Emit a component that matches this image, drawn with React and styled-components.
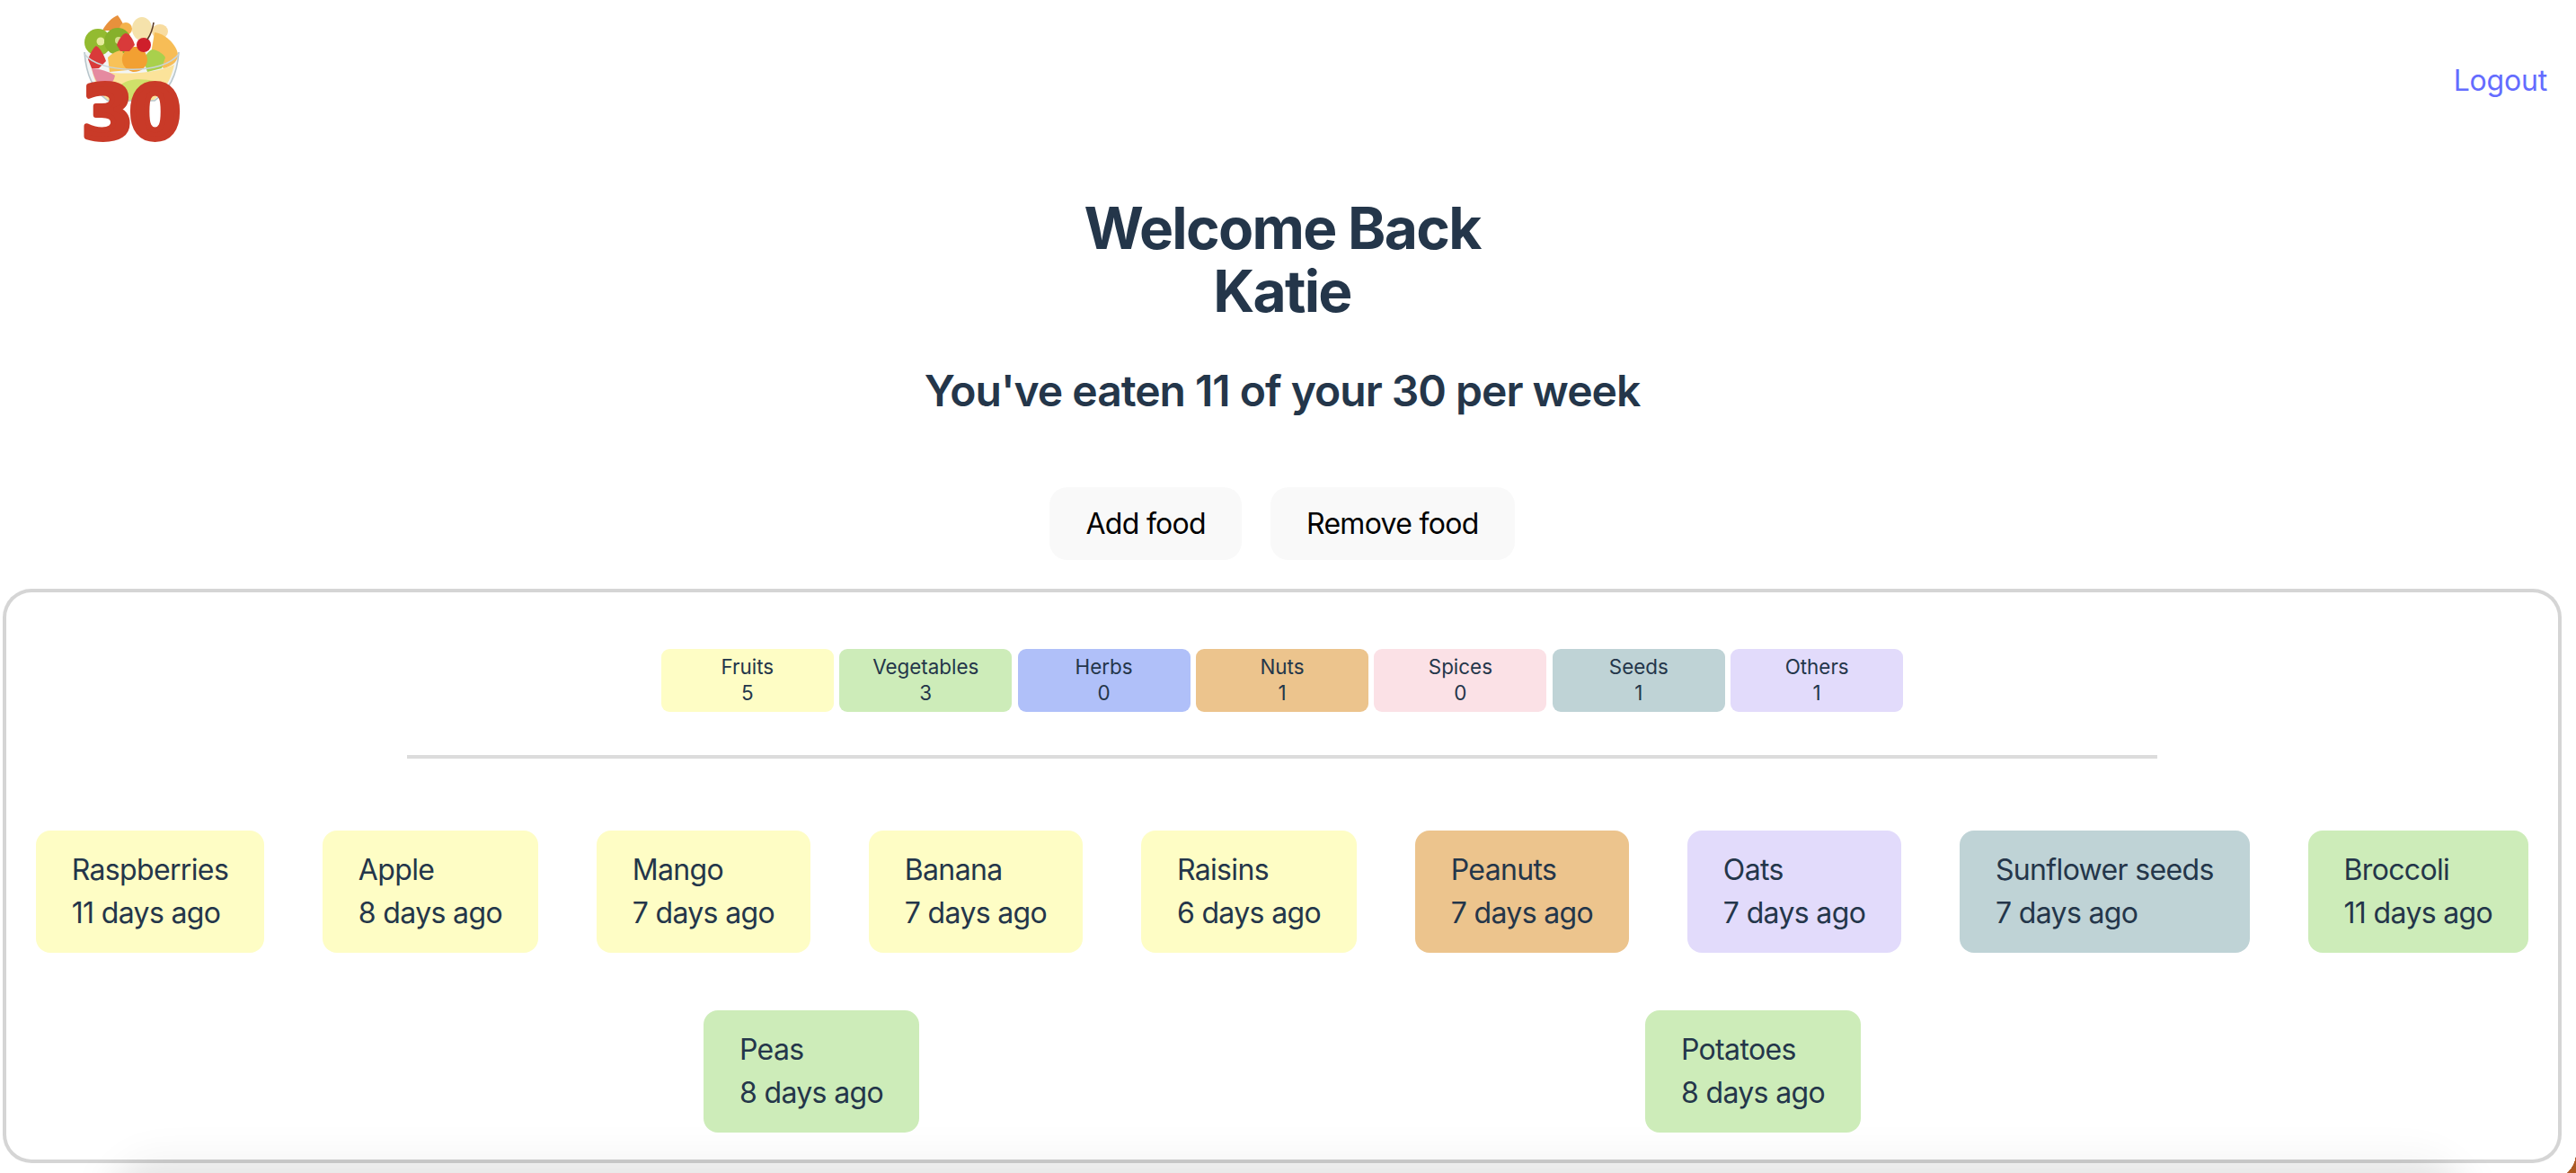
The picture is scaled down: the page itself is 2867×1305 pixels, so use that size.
import React from 'react'
import styled, { createGlobalStyle } from 'styled-components'

const GlobalStyle = createGlobalStyle`
  html, body {
    margin: 0;
    height: 100%;
    background: #fff;
  }
  body {
    font-family: Inter, "Liberation Sans", sans-serif;
    color: #24364a;
    overflow: hidden;
  }
`

const colors = {
  fruit: '#fefdc5',
  veg: '#cdecb9',
  herb: '#b0c0f9',
  nut: '#ecc48d',
  spice: '#fbe1e6',
  seed: '#bfd3d6',
  other: '#e2dbfb',
}

const categories = [
  { name: 'Fruits', count: 5, kind: 'fruit' },
  { name: 'Vegetables', count: 3, kind: 'veg' },
  { name: 'Herbs', count: 0, kind: 'herb' },
  { name: 'Nuts', count: 1, kind: 'nut' },
  { name: 'Spices', count: 0, kind: 'spice' },
  { name: 'Seeds', count: 1, kind: 'seed' },
  { name: 'Others', count: 1, kind: 'other' },
]

const foods = [
  { name: 'Raspberries', age: 11, kind: 'fruit' },
  { name: 'Apple', age: 8, kind: 'fruit' },
  { name: 'Mango', age: 7, kind: 'fruit' },
  { name: 'Banana', age: 7, kind: 'fruit' },
  { name: 'Raisins', age: 6, kind: 'fruit' },
  { name: 'Peanuts', age: 7, kind: 'nut' },
  { name: 'Oats', age: 7, kind: 'other' },
  { name: 'Sunflower seeds', age: 7, kind: 'seed' },
  { name: 'Broccoli', age: 11, kind: 'veg' },
  { name: 'Peas', age: 8, kind: 'veg' },
  { name: 'Potatoes', age: 8, kind: 'veg' },
]

// nine cards to a row
const foodRows = [foods.slice(0, 9), foods.slice(9)]

function Logo() {
  return (
    <LogoSvg viewBox="0 0 180 180">
      <path d="M34 58 C36 85 44 100 60 112 L112 112 C128 100 137 85 139 58 Z" fill="#f2f5f5" />
      <path d="M42 76 C60 84 110 84 134 72 C130 90 122 102 110 112 L60 112 C50 102 45 90 42 76 Z" fill="#fbe39a" />
      <path d="M42 76 C50 76 62 80 68 84 C66 94 60 96 52 96 C47 92 44 84 42 76 Z" fill="#e58aa0" />
      <path d="M75 94 C85 86 100 88 112 90 L100 114 L78 112 Z" fill="#cfe06a" />
      <path d="M54 34 C58 26 64 20 71 17 C75 22 78 28 80 34 Z" fill="#e8913c" />
      <circle cx="80" cy="32" r="7" fill="#f4b24c" />
      <ellipse cx="98" cy="32" rx="11" ry="13" fill="#f5e2ab" />
      <ellipse cx="118" cy="35" rx="9" ry="8" fill="#f8dca0" />
      <path d="M112 36 C126 38 138 52 138 62 C137 70 130 74 122 76 L108 60 Z" fill="#f7bd56" />
      <circle cx="49" cy="47" r="15" fill="#93bb30" />
      <circle cx="52" cy="46" r="4.5" fill="#e6ec9c" />
      <circle cx="71" cy="46" r="15" fill="#86b02b" />
      <circle cx="72" cy="45" r="4" fill="#d5e08a" />
      <path d="M60 64 C64 60 70 56 76 56 L82 78 L62 80 Z" fill="#f8c258" />
      <path d="M100 68 C102 60 106 56 110 55 C116 56 122 60 124 64 L120 76 L104 80 Z" fill="#a9d04c" />
      <path d="M76 64 C78 54 84 52 92 52 C98 52 103 58 104 66 C104 74 98 80 88 80 C80 78 75 72 76 64 Z" fill="#f2a032" />
      <path d="M70 50 C72 44 76 38 80 37 C85 38 88 44 90 50 L84 57 L74 57 Z" fill="#d93a3a" />
      <path d="M38 66 C40 60 44 53 47 51 C52 54 56 62 58 68 L50 76 L42 76 Z" fill="#d93a3a" />
      <circle cx="100" cy="50" r="8" fill="#cf1f2b" />
      <path d="M104 44 C108 38 110 32 111 25" fill="none" stroke="#5a3a25" strokeWidth="1.6" />
      <path d="M34 58 C36 85 44 100 60 112 L112 112 C128 100 137 85 139 58" fill="none" stroke="#b8c6cc" strokeWidth="1.6" />
      <path d="M34 60 C50 82 122 84 139 60" fill="none" stroke="#c9d4d8" strokeWidth="1.4" />
      <LogoText x="84" y="154" textAnchor="middle">30</LogoText>
    </LogoSvg>
  )
}

export default function App() {
  return (
    <Page>
      <GlobalStyle />
      <BottomShadow />
      <Header>
        <Logo />
        <LogoutLink href="#">Logout</LogoutLink>
      </Header>
      <Title>
        Welcome Back
        <br />
        Katie
      </Title>
      <Subtitle>You've eaten 11 of your 30 per week</Subtitle>
      <Actions>
        <ActionButton>Add food</ActionButton>
        <ActionButton>Remove food</ActionButton>
      </Actions>
      <Panel>
        <ChipRow>
          {categories.map((c) => (
            <Chip key={c.name} $kind={c.kind}>
              <span>{c.name}</span>
              <span>{c.count}</span>
            </Chip>
          ))}
        </ChipRow>
        <Divider />
        <FoodList>
          {foodRows.map((row, i) => (
            <FoodRow key={i}>
              {row.map((f) => (
                <FoodCard key={f.name} $kind={f.kind}>
                  <span>{f.name}</span>
                  <span>{f.age} days ago</span>
                </FoodCard>
              ))}
            </FoodRow>
          ))}
        </FoodList>
      </Panel>
      <WallpaperCorner />
    </Page>
  )
}

// =========================================

const Page = styled.div`
  position: relative;
  box-sizing: border-box;
  height: 1305px;
  padding-right: 13px;
  overflow: hidden;
  background: #fff;
  display: flex;
  flex-direction: column;
  align-items: center;
`

const Header = styled.header`
  align-self: stretch;
  height: 180px;
  margin: 0 -13px 39px 0;
  padding: 0 32px 0 60px;
  display: flex;
  justify-content: space-between;
  align-items: flex-start;
`

const LogoSvg = styled.svg`
  width: 180px;
  height: 180px;
`

const LogoText = styled.text`
  font-family: "DejaVu Sans", sans-serif;
  font-weight: 700;
  font-size: 82px;
  letter-spacing: -4px;
  fill: #c93a28;
  stroke: #c93a28;
  stroke-width: 6px;
  stroke-linejoin: round;
`

const LogoutLink = styled.a`
  margin-top: 70px;
  font-size: 32px;
  font-weight: 400;
  letter-spacing: -0.2px;
  color: #646cff;
  text-decoration: none;
`

const Title = styled.h1`
  margin: 0;
  font-size: 64px;
  font-weight: 650;
  letter-spacing: -1.7px;
  line-height: 1.1;
  text-align: center;
`

const Subtitle = styled.h2`
  margin: 46px 0 0;
  font-size: 48px;
  font-weight: 600;
  letter-spacing: -1px;
  line-height: 1.2;
  text-align: center;
`

const Actions = styled.div`
  margin-top: 79px;
  display: flex;
  gap: 32px;
`

const ActionButton = styled.button`
  height: 81px;
  padding: 0 40px;
  border: 0;
  border-radius: 20px;
  background: #f9f9f9;
  color: #000;
  font-family: inherit;
  font-size: 32px;
  font-weight: 400;
  letter-spacing: -0.7px;
`

const Panel = styled.section`
  position: relative;
  box-sizing: border-box;
  width: 2848px;
  height: 639px;
  margin: 32px 0 0 3px;
  align-self: flex-start;
  padding: 63px 0 0;
  border: 4px solid rgba(0, 0, 0, 0.165);
  border-radius: 32px;
  background: rgba(255, 255, 255, 0.55);
  background-clip: padding-box;
  display: flex;
  flex-direction: column;
  align-items: center;
`

const ChipRow = styled.div`
  display: flex;
  gap: 6.4px;
`

const Chip = styled.div`
  box-sizing: border-box;
  width: 192px;
  height: 70px;
  padding: 5px 0;
  border-radius: 9px;
  background: ${(p) => colors[p.$kind]};
  display: flex;
  flex-direction: column;
  align-items: center;
  font-size: 22.4px;
  line-height: 29px;
`

const Divider = styled.hr`
  box-sizing: border-box;
  width: 1948px;
  height: 4px;
  margin: 48px 0 80px;
  border: 0;
  background: #dcdcdc;
`

const FoodList = styled.div`
  align-self: stretch;
  display: flex;
  flex-direction: column;
  gap: 64px;
`

const FoodRow = styled.div`
  display: flex;
  justify-content: space-evenly;
  gap: 32px;
`

const FoodCard = styled.div`
  padding: 20px 40px;
  border-radius: 16px;
  background: ${(p) => colors[p.$kind]};
  display: flex;
  flex-direction: column;
  font-size: 32px;
  letter-spacing: -0.65px;
  line-height: 48px;
  white-space: nowrap;
`

const BottomShadow = styled.div`
  position: absolute;
  left: 120px;
  right: 122px;
  top: 1285px;
  height: 120px;
  border-radius: 120px;
  background: rgba(0, 0, 0, 0.1);
  filter: blur(20px);
  pointer-events: none;
`

const WallpaperCorner = styled.div`
  position: absolute;
  right: 0;
  bottom: 0;
  width: 10px;
  height: 20px;
  background: radial-gradient(circle 30px at -19.9px -2.4px, transparent 99%, #ad5a24 100%);
`
